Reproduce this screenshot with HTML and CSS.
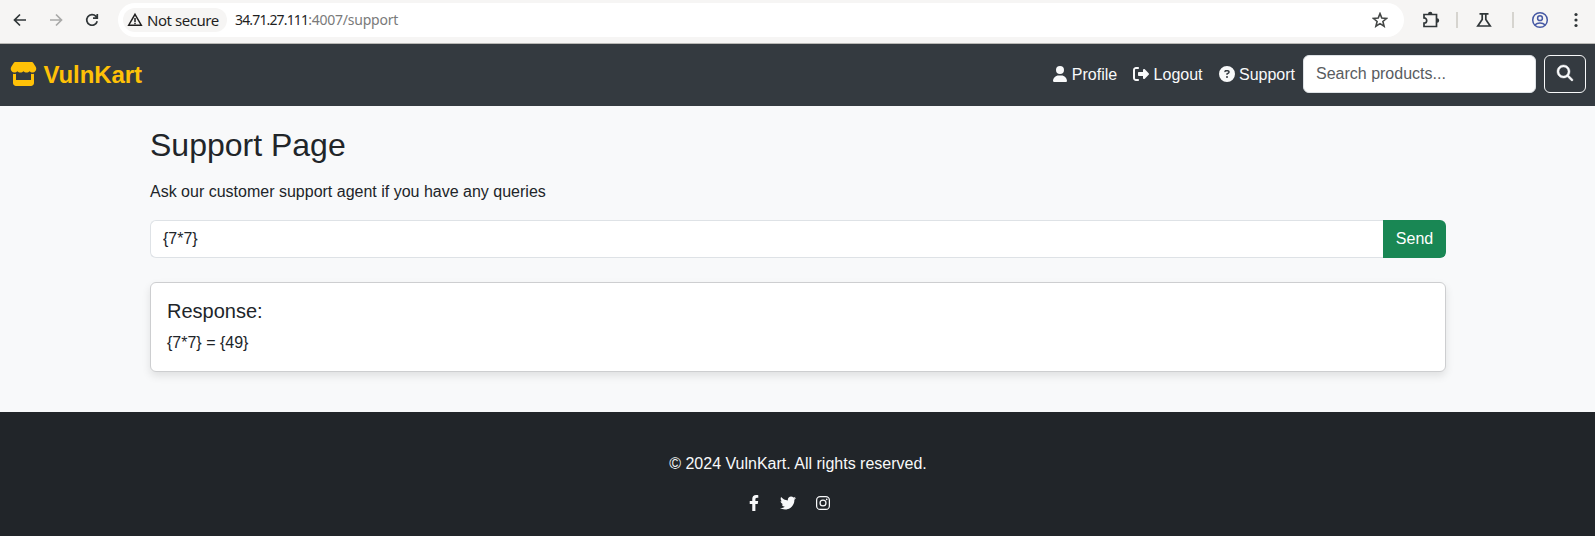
FILE: index.html
```html
<!DOCTYPE html>
<html lang="en">
<head>
<meta charset="utf-8">
<title>VulnKart</title>
<link rel="stylesheet" href="styles.css">
</head>
<body>
<div class="browser">
  <svg class="tool back" viewBox="0 0 16 16"><path d="M14 8H3M8 2.500 2.500 8 8 13.500"/></svg>
  <svg class="tool forward" viewBox="0 0 16 16"><path d="M2 8h11M8 2.500 13.500 8 8 13.500"/></svg>
  <svg class="tool reload" viewBox="0 0 16 16"><path d="M13.200 9.200A5.300 5.300 0 1 1 12 4.400L13.300 5.800M13.300 1.900V6.100H9"/></svg>
  <div class="address">
    <div class="chip">
      <svg class="warning" viewBox="0 0 16 16"><path d="M8 2.300 14.300 13.200H1.700Z"/><path d="M8 6v4M8 10.700v1.500"/></svg>
      <span>Not secure</span>
    </div>
    <div class="url"><span class="host">34.71.27.111</span><span class="path">:4007/support</span></div>
    <svg class="star" viewBox="0 0 16 16"><path d="M8 1.600 9.800 6.100 14.600 6.400 10.900 9.500 12.100 14.200 8 11.600 3.900 14.200 5.100 9.500 1.400 6.400 6.200 6.100Z"/></svg>
  </div>
  <svg class="tool puzzle" viewBox="0 0 18 18"><path d="M2 3.500H14.500V15.500H2V12.200A2.700 2.700 0 0 0 2 6.800Z"/><path class="solid" d="M6 3a2.200 2.200 0 0 1 4.400 0ZM15 7.300a2.200 2.200 0 0 1 0 4.400Z"/></svg>
  <i class="divider"></i>
  <svg class="tool flask" viewBox="0 0 16 16"><path d="M3.500 1.800h9M6.200 2v5.500L1.800 14H14.200L9.800 7.500V2"/></svg>
  <i class="divider"></i>
  <svg class="tool account" viewBox="0 0 18 18"><circle cx="9" cy="9" r="7.300"/><circle cx="9" cy="7.200" r="2.400"/><path d="M3.800 14c2.800-2.700 7.600-2.700 10.400 0"/></svg>
  <svg class="tool more" viewBox="0 0 16 16"><circle cx="8" cy="2.500" r="1.600"/><circle cx="8" cy="8" r="1.600"/><circle cx="8" cy="13.500" r="1.600"/></svg>
</div>
<nav class="navbar">
  <div class="brand">
    <svg class="store" viewBox="0 0 576 512"><path d="M547.6 103.8L490.3 13.1C485.2 5 476.1 0 466.4 0H109.6C99.9 0 90.8 5 85.7 13.1L28.3 103.8c-29.6 46.8-3.4 111.9 51.9 119.4c4 .5 8.1 .8 12.1 .8c26.1 0 49.3-11.4 65.2-29c15.9 17.6 39.1 29 65.2 29c26.1 0 49.3-11.4 65.2-29c15.9 17.6 39.1 29 65.2 29c26.2 0 49.3-11.4 65.2-29c16 17.6 39.1 29 65.2 29c4.1 0 8.1-.3 12.1-.8c55.500-7.400 81.800-72.500 52.100-119.400zM499.700 254.900c-5.300 .7-10.700 1.100-16.200 1.100c-12.400 0-24.300-1.900-35.400-5.300V384H128V250.600c-11.200 3.500-23.200 5.400-35.600 5.400c-5.500 0-11-.4-16.300-1.100l-.1 0c-4.100-.6-8.100-1.300-12-2.300V448c0 35.300 28.700 64 64 64H448c35.300 0 64-28.700 64-64V252.600c-4 1-8 1.800-12.300 2.300z"/></svg>
    <span class="brand-name">VulnKart</span>
  </div>
  <div class="links">
    <a class="link"><svg class="user" viewBox="0 0 448 512"><path d="M224 256A128 128 0 1 0 224 0a128 128 0 1 0 0 256zm-45.700 48C79.800 304 0 383.800 0 482.300C0 498.700 13.300 512 29.700 512H418.300c16.400 0 29.700-13.300 29.700-29.700C448 383.800 368.200 304 269.700 304H178.300z"/></svg><span class="label">Profile</span></a>
    <a class="link"><svg class="icon" viewBox="0 0 512 512"><path d="M377.900 105.900L500.700 228.700c7.200 7.200 11.300 17.100 11.300 27.300s-4.100 20.100-11.300 27.300L377.900 406.100c-6.400 6.400-15 9.900-24 9.900c-18.700 0-33.900-15.200-33.900-33.900l0-62.100-128 0c-17.700 0-32-14.300-32-32l0-64c0-17.700 14.300-32 32-32l128 0 0-62.100c0-18.700 15.200-33.900 33.900-33.900c9 0 17.600 3.600 24 9.900zM160 96L96 96c-17.700 0-32 14.300-32 32l0 256c0 17.700 14.300 32 32 32l64 0c17.700 0 32 14.300 32 32s-14.300 32-32 32l-64 0c-53 0-96-43-96-96L0 128C0 75 43 32 96 32l64 0c17.700 0 32 14.300 32 32s-14.300 32-32 32z"/></svg><span class="label">Logout</span></a>
    <a class="link"><svg class="icon" viewBox="0 0 512 512"><path d="M256 512A256 256 0 1 0 256 0a256 256 0 1 0 0 512zM169.800 165.300c7.900-22.300 29.100-37.300 52.800-37.300h58.300c34.900 0 63.100 28.300 63.100 63.100c0 22.600-12.100 43.500-31.700 54.800L280 264.400c-.2 13-10.900 23.600-24 23.600c-13.300 0-24-10.700-24-24V250.500c0-8.600 4.600-16.500 12.100-20.800l44.300-25.400c4.700-2.700 7.600-7.700 7.600-13.100c0-8.400-6.800-15.100-15.100-15.100H222.600c-3.400 0-6.400 2.100-7.500 5.300l-.4 1.200c-4.400 12.500-18.200 19-30.600 14.600s-19-18.200-14.600-30.600l.4-1.200zM224 352a32 32 0 1 1 64 0 32 32 0 1 1 -64 0z"/></svg><span class="label">Support</span></a>
    <input class="field search" type="text" placeholder="Search products...">
    <button class="search-button" aria-label="Search"><svg class="icon magnifier" viewBox="0 0 512 512"><path d="M416 208c0 45.900-14.900 88.300-40 122.700L502.600 457.400c12.500 12.500 12.500 32.800 0 45.300s-32.800 12.500-45.300 0L330.700 376c-34.400 25.200-76.800 40-122.700 40C93.100 416 0 322.900 0 208S93.100 0 208 0S416 93.100 416 208zM208 352a144 144 0 1 0 0-288 144 144 0 1 0 0 288z"/></svg></button>
  </div>
</nav>
<main class="container">
  <h2 class="title">Support Page</h2>
  <p class="intro">Ask our customer support agent if you have any queries</p>
  <div class="query">
    <input class="field message" type="text" value="{7*7}">
    <button class="send">Send</button>
  </div>
  <section class="card">
    <h5 class="card-title">Response:</h5>
    <p class="card-text">{7*7} = {49}</p>
  </section>
</main>
<footer class="footer">
  <p class="copyright">© 2024 VulnKart. All rights reserved.</p>
  <div class="social">
    <svg class="facebook" viewBox="0 0 320 512"><path d="M279.140 288l14.220-92.660h-88.910v-60.130c0-25.350 12.420-50.060 52.240-50.060h40.420V6.260S260.430 0 225.360 0c-73.220 0-121.080 44.380-121.080 124.720v70.620H22.890V288h81.390v224h100.170V288z"/></svg>
    <svg class="icon" viewBox="0 0 512 512"><path d="M459.370 151.716c.325 4.548.325 9.097.325 13.645 0 138.720-105.583 298.558-298.558 298.558-59.452 0-114.680-17.219-161.137-47.106 8.447.974 16.568 1.299 25.340 1.299 49.055 0 94.213-16.568 130.274-44.832-46.132-.975-84.792-31.188-98.112-72.772 6.498.974 12.995 1.624 19.818 1.624 9.421 0 18.843-1.300 27.614-3.573-48.081-9.747-84.143-51.980-84.143-102.985v-1.299c13.969 7.797 30.214 12.670 47.431 13.319-28.264-18.843-46.781-51.005-46.781-87.391 0-19.492 5.197-37.360 14.294-52.954 51.655 63.675 129.300 105.258 216.365 109.807-1.624-7.797-2.599-15.918-2.599-24.040 0-57.828 46.782-104.934 104.934-104.934 30.213 0 57.502 12.670 76.670 33.137 23.715-4.548 46.456-13.320 66.599-25.340-7.798 24.366-24.366 44.833-46.132 57.827 21.117-2.273 41.584-8.122 60.426-16.243-14.292 20.791-32.161 39.308-52.628 54.253z"/></svg>
    <svg class="instagram" viewBox="0 0 448 512"><rect x="20" y="52" width="408" height="408" rx="112"/><circle cx="224" cy="256" r="95"/><circle class="lens" cx="343" cy="137" r="27"/></svg>
  </div>
</footer>
</body>
</html>
```
FILE: styles.css
```css
* { box-sizing: border-box; }
body {
  margin: 0;
  height: 536px;
  overflow: hidden;
  display: flex;
  flex-direction: column;
  background: #f8f9fa;
  color: #212529;
  font: 16px/24px "Liberation Sans", Arial, sans-serif;
}
svg { display: block; flex: none; fill: currentColor; }
h2, h5, p { margin: 0; font-weight: 400; }
input, button { font: inherit; }

.browser {
  flex: none;
  display: flex;
  align-items: center;
  height: 44px;
  padding: 0 11px 3px 12px;
  background: #f6f5f4;
  border-bottom: 1px solid #b9b8b5;
  color: #303638;
}
.tool { width: 16px; height: 16px; fill: none; stroke: currentColor; stroke-width: 1.7; }
.forward { margin-left: 20px; color: #a9a9a8; }
.reload { margin-left: 20px; }
.address {
  flex: 1;
  display: flex;
  align-items: center;
  height: 34px;
  margin-left: 18px;
  padding: 0 16px 0 5px;
  border-radius: 17px;
  background: #fff;
}
.chip {
  display: flex;
  align-items: center;
  gap: 4px;
  width: 104px;
  height: 24px;
  padding-left: 4px;
  border-radius: 12px;
  background: #f6f5f4;
  color: #1f1f1f;
  font: 15px/22px "Noto Sans", sans-serif;
  letter-spacing: -0.45px;
  white-space: nowrap;
}
.warning { width: 16px; height: 16px; fill: none; stroke: currentColor; stroke-width: 1.5; }
.url { flex: 1; margin-left: 8px; font: 14px/24px "Noto Sans", sans-serif; color: #1f1f1f; }
.host { letter-spacing: -0.85px; }
.path { color: #7a7a7a; letter-spacing: -0.22px; }
.star { width: 16px; height: 16px; fill: none; stroke: #444746; stroke-width: 1.6; }
.puzzle { width: 18px; height: 18px; margin-left: 18px; }
.solid { fill: currentColor; stroke: none; }
.divider { width: 2px; height: 16px; background: #d6d4cf; }
.puzzle + .divider { margin-left: 16px; }
.flask { margin-left: 18px; }
.flask + .divider { margin-left: 20px; }
.account { width: 18px; height: 18px; margin-left: 17px; color: #4659a4; stroke-width: 1.5; }
.more { margin-left: 19px; fill: currentColor; stroke: none; }

.navbar {
  flex: none;
  display: flex;
  justify-content: space-between;
  align-items: center;
  height: 62px;
  padding: 0 9px 2px 10px;
  background: #343a40;
}
.brand { display: flex; align-items: center; gap: 6.5px; color: #ffc107; font-size: 24px; font-weight: 700; }
.brand-name { padding-top: 2px; letter-spacing: -0.1px; }
.store { width: 27px; height: 24px; }
.links { display: flex; align-items: center; color: #f8f9fa; }
.link { display: flex; align-items: center; gap: 4.45px; padding: 0 8px; }
.label { padding-top: 2px; }
.icon { width: 16px; height: 16px; }
.user { width: 14px; height: 16px; }
.field {
  height: 38px;
  padding: 6px 12px;
  border: 1px solid #dee2e6;
  border-radius: 6px;
  background: #fff;
  color: #212529;
  outline: 0;
}
.field::placeholder { color: #595c5f; opacity: 1; }
.search { width: 233px; }
.search-button {
  width: 42px;
  height: 38px;
  margin-left: 8px;
  padding: 0 12px 2px;
  border: 1px solid #f8f9fa;
  border-radius: 6px;
  background: none;
  color: #f8f9fa;
}
.magnifier { stroke: currentColor; stroke-width: 14; overflow: visible; }

.container { flex: none; width: 1319px; height: 306px; margin: 0 auto; padding: 20px 11px 0 12px; }
.title { font-size: 32px; line-height: 38px; }
.intro { margin-top: 16px; }
.query { display: flex; margin-top: 16px; }
.message { flex: 1; border-right: 0; border-radius: 6px 0 0 6px; }
.send {
  width: 63px;
  height: 38px;
  padding: 0;
  border: 0;
  border-radius: 0 6px 6px 0;
  background: #198754;
  color: #fff;
}
.card {
  height: 90px;
  margin-top: 24px;
  padding: 16px;
  border: 1px solid #cdced0;
  border-radius: 6px;
  background: #fff;
  box-shadow: 0 4px 8px rgba(0, 0, 0, .1);
}
.card-title { margin-bottom: 8px; font-size: 20px; }

.footer { flex: 1; padding: 40px 0 0 1px; background: #212529; color: #f8f9fa; text-align: center; }
.social { display: flex; justify-content: center; align-items: center; margin: 19px 17px 0 0; }
.facebook { width: 10px; height: 16px; margin-right: 20.5px; }
.instagram { width: 14px; height: 16px; margin-left: 20.5px; fill: none; stroke: currentColor; stroke-width: 40; }
.lens { fill: currentColor; stroke: none; }
```
